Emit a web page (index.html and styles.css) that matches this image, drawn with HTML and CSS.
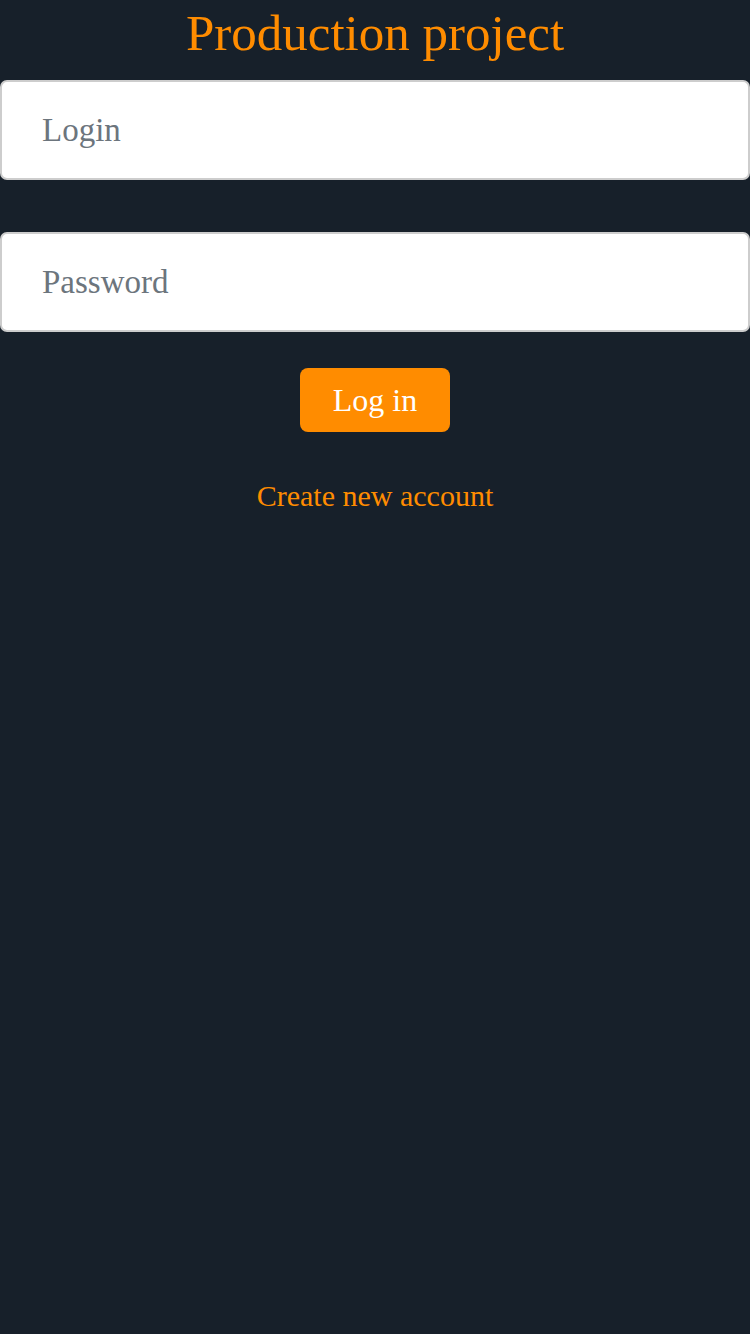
FILE: index.html
```html
<!DOCTYPE html>
<html>
<head>
<meta charset="utf-8">
<link rel="stylesheet" href="styles.css">
</head>
<body>
<main class="page">
  <h1 class="title">Production project</h1>
  <form class="form">
    <input class="field" type="text" placeholder="Login">
    <input class="field" type="password" placeholder="Password">
    <button class="btn" type="button">Log in</button>
    <a class="link" href="#">Create new account</a>
  </form>
</main>
</body>
</html>
```
FILE: styles.css
```css
html, body {
  margin: 0;
  padding: 0;
  background: #17202a;
  height: 100%;
}
.page {
  font-family: "Liberation Serif", "DejaVu Serif", serif;
  display: flex;
  flex-direction: column;
}
.title {
  margin: 0;
  height: 80px;
  box-sizing: border-box;
  padding-top: 4px;
  text-align: center;
  color: #ff8c00;
  font-weight: normal;
  font-size: 51px;
  line-height: 58px;
}
.form {
  display: flex;
  flex-direction: column;
  align-items: center;
}
.field {
  width: 100%;
  height: 100px;
  box-sizing: border-box;
  border: 2px solid #cdcdcd;
  border-radius: 7px;
  background: #fff;
  padding: 0 0 0 40px;
  font-family: inherit;
  font-size: 33px;
  color: #333;
  outline: none;
  margin: 0 0 52px 0;
}
.field + .field {
  margin-bottom: 36px;
}
.field::placeholder {
  color: #6c757d;
  opacity: 1;
}
.btn {
  width: 150px;
  height: 64px;
  border: none;
  border-radius: 8px;
  background: #ff8c00;
  color: #fff;
  font-family: inherit;
  font-size: 32px;
  padding: 0;
  cursor: pointer;
}
.link {
  margin-top: 47px;
  color: #ff8c00;
  text-decoration: none;
  font-size: 30px;
  line-height: 34px;
}
```
